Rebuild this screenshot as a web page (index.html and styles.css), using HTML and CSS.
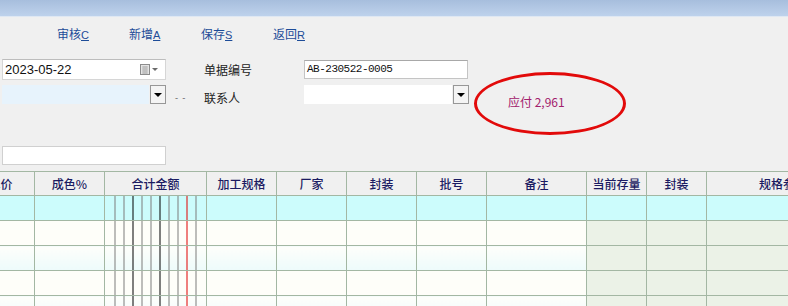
FILE: index.html
```html
<!DOCTYPE html>
<html lang="zh-CN">
  <head>
    <meta charset="UTF-8" />
    <title>采购单</title>
    <link rel="stylesheet" href="styles.css">
  </head>
  <body>
    <div class="titlebar"></div>

    <div class="toolbar">
      <a href="#">审核<u>C</u></a>
      <a href="#">新增<u>A</u></a>
      <a href="#">保存<u>S</u></a>
      <a href="#">返回<u>R</u></a>
    </div>

    <section class="form">
      <div class="row">
        <div class="datebox">
          <span>2023-05-22</span>
          <svg class="cal" width="20" height="12" viewBox="0 0 20 12">
            <rect x="0.5" y="0.5" width="9" height="10" fill="#e4e4e4" stroke="#8c8c8c" />
            <path d="M2 3h6M2 5h6M2 7h6M2 9h6M4 2v8M6 2v8" stroke="#b4b4b4" stroke-width="1" />
            <path d="M12 4h6l-3 3z" fill="#6a6a6a" />
          </svg>
        </div>
        <div class="spacer"></div>
        <label>单据编号</label>
        <div class="textbox mono">AB-230522-0005</div>
      </div>

      <div class="row row2">
        <div class="combo">
          <div class="combo-field blue"></div>
          <div class="drop"><i></i></div>
        </div>
        <div class="spacer dots">- -</div>
        <label>联系人</label>
        <div class="combo wide">
          <div class="combo-field"></div>
          <div class="drop"><i></i></div>
        </div>
      </div>

      <div class="row row3">
        <div class="textbox short"></div>
      </div>

      <div class="due">应付 2,961</div>
    </section>

    <table class="grid">
      <colgroup>
        <col style="width:68px"><col style="width:70px"><col style="width:102px">
        <col style="width:70px"><col style="width:70px"><col style="width:70px">
        <col style="width:70px"><col style="width:100px"><col style="width:60px">
        <col style="width:60px"><col style="width:153px">
      </colgroup>
      <thead>
        <tr>
          <th>单价</th><th>成色%</th><th>合计金额</th><th>加工规格</th><th>厂家</th><th>封装</th>
          <th>批号</th><th>备注</th><th>当前存量</th><th>封装</th><th>规格参数</th>
        </tr>
      </thead>
      <tbody>
        <tr class="current">
          <td></td><td></td><td class="money"></td><td></td><td></td><td></td>
          <td></td><td></td><td class="ro"></td><td class="ro"></td><td class="ro"></td>
        </tr>
        <tr>
          <td></td><td></td><td class="money"></td><td></td><td></td><td></td>
          <td></td><td></td><td class="ro"></td><td class="ro"></td><td class="ro"></td>
        </tr>
        <tr class="alt">
          <td></td><td></td><td class="money"></td><td></td><td></td><td></td>
          <td></td><td></td><td class="ro"></td><td class="ro"></td><td class="ro"></td>
        </tr>
        <tr>
          <td></td><td></td><td class="money"></td><td></td><td></td><td></td>
          <td></td><td></td><td class="ro"></td><td class="ro"></td><td class="ro"></td>
        </tr>
        <tr class="alt">
          <td></td><td></td><td class="money"></td><td></td><td></td><td></td>
          <td></td><td></td><td class="ro"></td><td class="ro"></td><td class="ro"></td>
        </tr>
      </tbody>
    </table>
  </body>
</html>
```

FILE: styles.css
```css
* {
  margin: 0;
  padding: 0;
  box-sizing: border-box;
}

:root {
  /* digit guide lines of the amount column, red one marks the decimal point */
  --digits: linear-gradient(to right,
    transparent 9px, #7b7b7b 9px 10px,
    transparent 10px 18px, #7b7b7b 18px 19px,
    transparent 19px 27px, #000 27px 28px,
    transparent 28px 36px, #7b7b7b 36px 37px,
    transparent 37px 45px, #7b7b7b 45px 46px,
    transparent 46px 54px, #000 54px 55px,
    transparent 55px 63px, #7b7b7b 63px 64px,
    transparent 64px 72px, #7b7b7b 72px 73px,
    transparent 73px 81px, #e00000 81px 82px,
    transparent 82px 90px, #7b7b7b 90px 91px,
    transparent 91px);
}

body {
  background: #f0f0f0;
  font-family: "Noto Sans CJK SC", "Liberation Sans", sans-serif;
  font-size: 12px;
  color: #222;
  overflow: hidden;
}

.titlebar {
  height: 17px;
  background: linear-gradient(#a7bedd, #bed2ec);
  border-bottom: 1px solid #dfe8f3;
}

.toolbar {
  display: flex;
  height: 34px;
  line-height: 34px;
  padding-left: 57px;
}

.toolbar a {
  width: 72px;
  color: #1d4c98;
  text-decoration: none;
}

.toolbar u {
  font-family: "Liberation Sans", sans-serif;
  font-size: 11px;
}

.form {
  position: relative;
  padding: 8px 0 0 2px;
}

.row {
  display: flex;
  align-items: center;
  height: 21px;
}

.row2 {
  margin-top: 5px;
  height: 19px;
}

.row2 label,
.row2 .dots {
  padding-top: 5px;
}

.row3 {
  margin-top: 42px;
  height: 19px;
}

.spacer {
  width: 38px;
}

.dots {
  padding-left: 9px;
  font-size: 9px;
  color: #555;
  letter-spacing: 1px;
}

label {
  width: 100px;
  color: #222;
}

.datebox {
  display: flex;
  align-items: center;
  justify-content: space-between;
  width: 164px;
  height: 21px;
  padding: 0 5px 0 2px;
  background: #fff;
  border: 1px solid #d6d6d6;
  border-top-color: #bdbdbd;
  font-family: "Liberation Sans", sans-serif;
  font-size: 13px;
  color: #111;
}

.textbox {
  width: 164px;
  height: 19px;
  background: #fff;
  border: 1px solid #c4c4c4;
  border-top-color: #a8a8a8;
  line-height: 17px;
  padding-left: 2px;
}

.short {
  border-color: #d0d0d0;
}

.mono {
  font-family: "Liberation Mono", monospace;
  font-size: 11px;
  letter-spacing: -0.5px;
  color: #111;
}

.combo {
  display: flex;
  width: 164px;
  height: 19px;
}

.combo.wide {
  width: 165px;
}

.combo-field {
  flex: 1;
  background: #fff;
}

.combo-field.blue {
  background: #e7f3fc;
}

.drop {
  display: flex;
  align-items: center;
  justify-content: center;
  width: 16px;
  margin-left: 1px;
  background: #f4f4f4;
  border: 1px solid #979797;
}

.drop i {
  border-left: 4px solid transparent;
  border-right: 4px solid transparent;
  border-top: 4px solid #000;
}

.due {
  position: absolute;
  left: 474px;
  top: 21px;
  width: 152px;
  height: 63px;
  padding: 19px 0 0 31px;
  border: 3px solid #e20a0a;
  border-radius: 50%;
  color: #a2206c;
  line-height: 15px;
}

.grid {
  margin: 6px 0 0 -34px;
  border-collapse: collapse;
  table-layout: fixed;
  width: 893px;
}

.grid th,
.grid td {
  border: 1px solid #a3b7a3;
}

.grid th {
  height: 24px;
  background: #f0f0f0;
  font-weight: 500;
  color: #1b1b62;
  text-align: center;
}

.grid td {
  height: 25px;
  background: #fefef9;
}

.grid tr.alt td {
  background: linear-gradient(#fefefb, #edfbfb);
}

.grid td.ro,
.grid tr.alt td.ro {
  background: #ebf2e7;
}

.grid tr.current td {
  background: #ccfcfc;
}

.grid tr td.money {
  background: var(--digits), #fefef9;
}

.grid tr.alt td.money {
  background: var(--digits), linear-gradient(#fefefb, #edfbfb);
}

.grid tr.current td.money {
  background: var(--digits), #ccfcfc;
}
```
